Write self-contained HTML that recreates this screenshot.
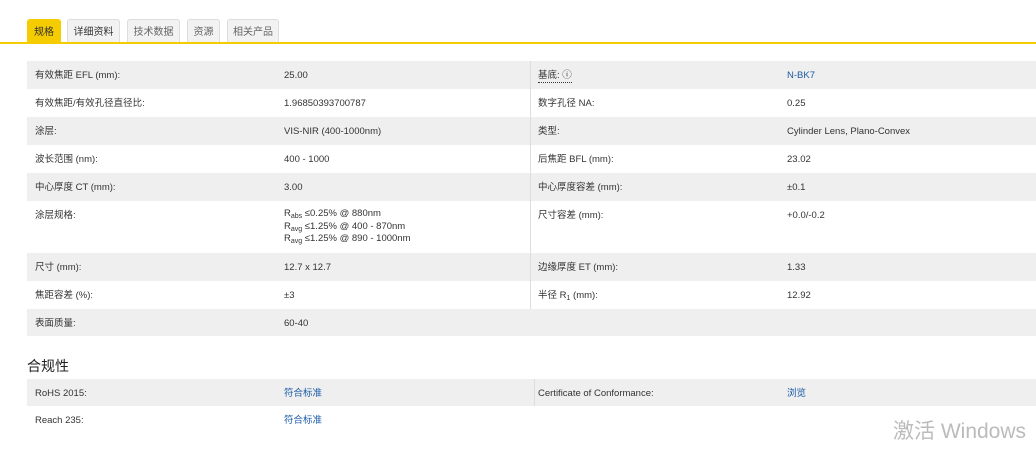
<!DOCTYPE html>
<html><head><meta charset="utf-8"><style>
*{margin:0;padding:0;box-sizing:border-box}
body{width:1036px;height:450px;background:#fff;font-family:"Liberation Sans","Noto Sans CJK SC",sans-serif;font-size:9.5px;color:#333;position:relative;overflow:hidden}
.tab{position:absolute;top:19px;height:25px;border:1px solid #ddd;border-bottom:none;background:#f2f2f2;border-radius:3px 3px 0 0;color:#666;font-size:10px;line-height:26px;text-align:center}
.tab.on{background:#f5cc00;border-color:#f5cc00;color:#333}
.line{position:absolute;top:42px;left:0;width:1036px;height:2px;background:#f5cc00}
.row{position:absolute;left:27px;width:1009px}
.g{background:#efefef}
.c{position:absolute;top:9px;line-height:12px;white-space:nowrap}
.div{position:absolute;left:503px;top:0;bottom:0;width:1px;background:#ddd}
a{color:#1a5aa6;text-decoration:none}
sub{font-size:7px;vertical-align:-2px;line-height:0}
</style></head><body>
<div class="tab on" style="left:27px;width:34px">规格</div>
<div class="tab" style="left:67px;width:53px;color:#333">详细资料</div>
<div class="tab" style="left:127px;width:53px">技术数据</div>
<div class="tab" style="left:187px;width:33px">资源</div>
<div class="tab" style="left:227px;width:52px">相关产品</div>
<div class="line"></div>

<div class="row g" style="top:61px;height:28px"><div class="div"></div><span class="c" style="left:8px">有效焦距 EFL (mm):</span><span class="c" style="left:257px">25.00</span><span class="c" style="left:511px;border-bottom:1px dotted #333">基底: ⓘ</span><a class="c" style="left:760px">N-BK7</a></div>
<div class="row" style="top:89px;height:28px"><div class="div"></div><span class="c" style="left:8px">有效焦距/有效孔径直径比:</span><span class="c" style="left:257px">1.96850393700787</span><span class="c" style="left:511px">数字孔径 NA:</span><span class="c" style="left:760px">0.25</span></div>
<div class="row g" style="top:117px;height:28px"><div class="div"></div><span class="c" style="left:8px">涂层:</span><span class="c" style="left:257px">VIS-NIR (400-1000nm)</span><span class="c" style="left:511px">类型:</span><span class="c" style="left:760px">Cylinder Lens, Plano-Convex</span></div>
<div class="row" style="top:145px;height:28px"><div class="div"></div><span class="c" style="left:8px">波长范围 (nm):</span><span class="c" style="left:257px">400 - 1000</span><span class="c" style="left:511px">后焦距 BFL (mm):</span><span class="c" style="left:760px">23.02</span></div>
<div class="row g" style="top:173px;height:28px"><div class="div"></div><span class="c" style="left:8px">中心厚度 CT (mm):</span><span class="c" style="left:257px">3.00</span><span class="c" style="left:511px">中心厚度容差 (mm):</span><span class="c" style="left:760px">±0.1</span></div>
<div class="row" style="top:201px;height:52px"><div class="div"></div><span class="c" style="left:8px">涂层规格:</span><span class="c" style="left:257px;top:7px;line-height:12.5px">R<sub>abs</sub> ≤0.25% @ 880nm<br>R<sub>avg</sub> ≤1.25% @ 400 - 870nm<br>R<sub>avg</sub> ≤1.25% @ 890 - 1000nm</span><span class="c" style="left:511px">尺寸容差 (mm):</span><span class="c" style="left:760px">+0.0/-0.2</span></div>
<div class="row g" style="top:253px;height:28px"><div class="div"></div><span class="c" style="left:8px">尺寸 (mm):</span><span class="c" style="left:257px">12.7 x 12.7</span><span class="c" style="left:511px">边缘厚度 ET (mm):</span><span class="c" style="left:760px">1.33</span></div>
<div class="row" style="top:281px;height:28px"><div class="div"></div><span class="c" style="left:8px">焦距容差 (%):</span><span class="c" style="left:257px">±3</span><span class="c" style="left:511px">半径 R<sub>1</sub> (mm):</span><span class="c" style="left:760px">12.92</span></div>
<div class="row g" style="top:309px;height:27px"><span class="c" style="left:8px">表面质量:</span><span class="c" style="left:257px">60-40</span></div>

<div style="position:absolute;left:27px;top:357px;font-size:14px;line-height:18px;color:#222">合规性</div>
<div class="row g" style="top:379px;height:27px"><div class="div" style="left:507px"></div><span class="c" style="left:8px">RoHS 2015:</span><a class="c" style="left:257px">符合标准</a><span class="c" style="left:511px">Certificate of Conformance:</span><a class="c" style="left:760px">浏览</a></div>
<div class="row" style="top:406px;height:28px"><span class="c" style="left:8px">Reach 235:</span><a class="c" style="left:257px">符合标准</a></div>
<div style="position:absolute;left:893px;top:419px;font-size:21px;line-height:26px;color:#bbb;white-space:nowrap">激活 Windows</div>
</body></html>
